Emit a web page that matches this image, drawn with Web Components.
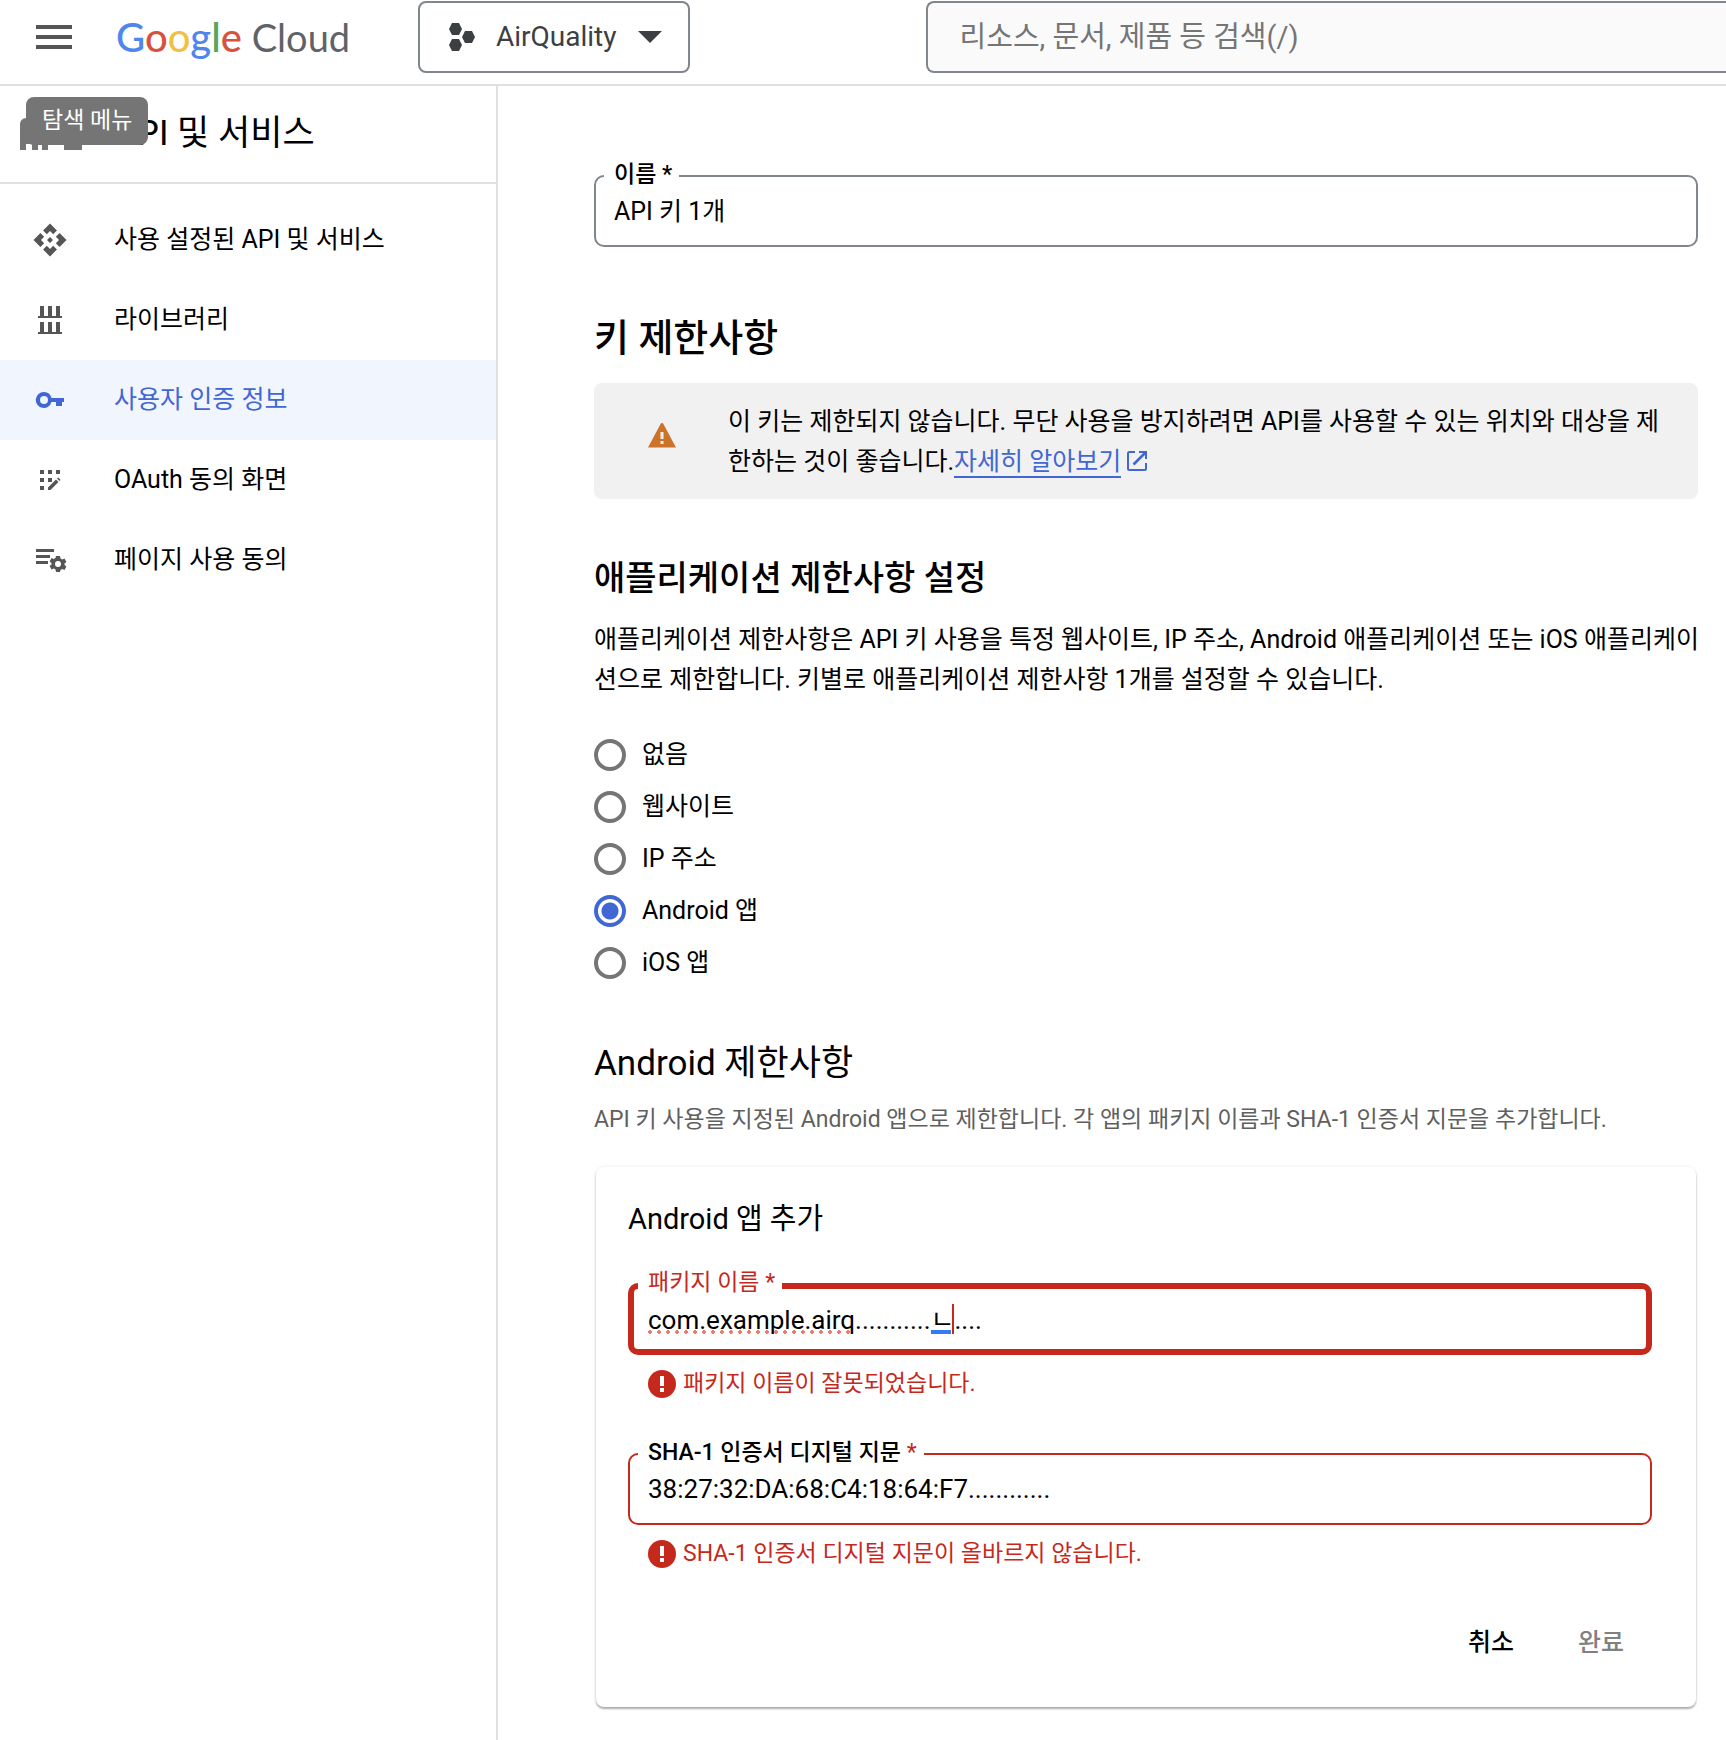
<!DOCTYPE html>
<html lang="ko">
<head>
<meta charset="utf-8">
<title>API 키 수정 - Google Cloud</title>
<style>
    html, body { margin: 0; height: 100%; }
    body {
        font-family: Roboto, "Noto Sans CJK KR", sans-serif;
        font-size: 25px;
        line-height: 32px;
        color: #000;
        background: #fff;
        overflow: hidden;
    }
</style>
</head>
<body>
<console-app>
    <console-header slot="header" project="AirQuality"></console-header>
    <side-nav slot="nav" heading="API 및 서비스">
        <nav-item icon="api">사용 설정된 API 및 서비스</nav-item>
        <nav-item icon="library">라이브러리</nav-item>
        <nav-item icon="key" active>사용자 인증 정보</nav-item>
        <nav-item icon="consent">OAuth 동의 화면</nav-item>
        <nav-item icon="usage">페이지 사용 동의</nav-item>
    </side-nav>
    <key-form></key-form>
</console-app>

<script>
const ICONS = {
    menu: `<svg width="36" height="24" viewBox="0 0 36 24"><path fill="#555" d="M0 0h36v4H0zM0 10h36v4H0zM0 20h36v4H0z"/></svg>`,
    project: `<svg width="26" height="28" viewBox="0 0 26 28"><path fill="#3c4043" d="M3 0h7l3 6-3 6H3L0 6zM3 16h7l3 6-3 6H3l-3-6zM16 8h7l3 6-3 6h-7l-3-6z"/></svg>`,
    caret: `<svg width="24" height="12" viewBox="0 0 24 12"><path fill="#3c4043" d="M0 0h24L12 12z"/></svg>`,
    product: `<svg width="64" height="32" viewBox="0 0 64 32"><path fill="#757575" d="M6 0h22v32h-6v-6h-4v6h-6v-6H6v6H0V6a6 6 0 0 1 6-6zM44 0h18v32H44z"/></svg>`,
    api: `<svg width="36" height="36" viewBox="0 0 24 24"><path fill="currentColor" d="M14 12l-2 2-2-2 2-2 2 2zm-2-6l2.120 2.120 2.500-2.500L12 1 7.380 5.620l2.500 2.500L12 6zm-6 6l2.120-2.120-2.500-2.500L1 12l4.620 4.620 2.500-2.500L6 12zm12 0l-2.120 2.120 2.500 2.500L23 12l-4.620-4.620-2.500 2.500L18 12zm-6 6l-2.120-2.120-2.500 2.500L12 23l4.620-4.620-2.500-2.500L12 18z"/></svg>`,
    library: `<svg width="24" height="28" viewBox="0 0 24 28"><path fill="currentColor" d="M2 0h4v10h4V0h4v10h4V0h4v10h2v2H0v-2h2zM2 16h4v10h4V16h4v10h4V16h4v10h2v2H0v-2h2z"/></svg>`,
    key: `<svg width="28" height="16" viewBox="0 0 28 16"><path fill="currentColor" fill-rule="evenodd" d="M8 0a8 8 0 0 1 7.500 6H28v4h-2v4h-6v-4h-4.500A8 8 0 1 1 8 0zm0 4a4 4 0 1 0 0 8 4 4 0 0 0 0-8z"/></svg>`,
    consent: `<svg width="20" height="20" viewBox="0 0 20 20"><path fill="currentColor" d="M0 0h4v4H0zM8 0h4v4H8zM16 0h4v4h-4zM0 8h4v4H0zM8 8h4v4H8zM0 16h4v4H0zM8 20v-2.500l8-8 2.500 2.500-8 8zM17 8.500l1.300-1 2.200 2.200-1 1.300z"/></svg>`,
    usage: `<svg width="28" height="22" viewBox="0 0 28 22"><path fill="currentColor" d="M0 0h18v3H0zM0 6h14v3H0zM0 12h12v3H0z"/><path fill="currentColor" fill-rule="evenodd" d="M20 7h4l.5 2.500 1.700 1 2.300-.9 1.900 3.300-1.900 1.600v1.500l1.900 1.600-1.900 3.300-2.300-.9-1.700 1L24 23h-4l-.5-2.500-1.700-1-2.300.9-1.900-3.300 1.900-1.600v-1.500l-1.900-1.600 1.900-3.300 2.300.9 1.700-1zM22 12a3 3 0 1 0 0 6 3 3 0 0 0 0-6z"/></svg>`,
    warning: `<svg width="28" height="25" viewBox="0 0 28 25"><path fill="#cd7229" d="M14 0c.6 0 1 .3 1.300.8L28 24.500H0L12.700.8c.3-.5.7-.8 1.300-.8z"/><path fill="#f1f1f1" d="M12.500 9h3v7h-3zM12.500 18h3v3h-3z"/></svg>`,
    error: `<svg width="28" height="28" viewBox="0 0 28 28"><circle cx="14" cy="14" r="14" fill="#c5291c"/><path fill="#fff" d="M12 6h4v10h-4zM12 18h4v4h-4z"/></svg>`,
    launch: `<svg width="20" height="20" viewBox="0 0 20 20"><path fill="none" stroke="#4067d3" stroke-width="2" d="M8 1H2.500A1.500 1.500 0 0 0 1 2.500v15A1.500 1.500 0 0 0 2.500 19h15a1.500 1.500 0 0 0 1.500-1.500V12M12 1h7v7"/><path stroke="#4067d3" stroke-width="2.600" d="M18.500 1.500L6.500 13.500"/></svg>`
};

class ConsoleApp extends HTMLElement {
    constructor() {
        super();
        this.attachShadow({ mode: 'open' }).innerHTML = `
            <style>
                :host { display: flex; flex-direction: column; min-height: 100%; }
                .body { display: flex; flex: 1; }
                main { flex: 1; min-width: 0; padding: 89px 28px 32px 96px; }
            </style>
            <slot name="header"></slot>
            <div class="body">
                <slot name="nav"></slot>
                <main><slot></slot></main>
            </div>
        `;
    }
}

class ConsoleHeader extends HTMLElement {
    constructor() {
        super();
        this.attachShadow({ mode: 'open' }).innerHTML = `
            <style>
                :host { display: block; border-bottom: 2px solid #e0e0e0; }
                header { display: flex; align-items: center; height: 74px; padding-bottom: 10px; }
                button { font: inherit; background: none; border: 0; padding: 0; }
                svg { display: block; }
                .menu { position: relative; padding: 0 36px; }
                .tip {
                    position: absolute; z-index: 1; top: 72px; left: 26px;
                    padding: 0 16px; border-radius: 8px;
                    background: #757575; color: #fff;
                    font-size: 23px; line-height: 48px; white-space: nowrap;
                }
                .logo {
                    width: 302px; padding-left: 8px;
                    font-family: Lato, sans-serif; font-size: 38px;
                    color: #5f6368; text-decoration: none; white-space: nowrap;
                }
                .logo b { font-size: 40px; font-weight: 500; }
                .b { color: #4f86ee; } .r { color: #d9503f; }
                .y { color: #f2bf42; } .g { color: #58a55c; }
                .project {
                    display: flex; align-items: center; flex: none;
                    height: 72px; padding: 0 26px 0 29px; gap: 21px;
                    border: 2px solid #80868b; border-radius: 8px;
                    font-size: 28px; color: #3c4043;
                }
                input {
                    flex: 1; min-width: 0; box-sizing: border-box; height: 72px;
                    margin: 0 0 0 236px; padding: 0 32px;
                    border: 2px solid #80868b; border-right: 0; border-radius: 8px 0 0 8px;
                    background: #fafafa; font: inherit; font-size: 29px;
                }
                input::placeholder { color: #757575; opacity: 1; }
            </style>
            <header>
                <button class="menu" aria-label="탐색 메뉴">${ICONS.menu}<span class="tip" role="tooltip">탐색 메뉴</span></button>
                <a class="logo" href="#"><b><span class="b">G</span><span class="r">o</span><span class="y">o</span><span class="b">g</span><span class="g">l</span><span class="r">e</span></b> Cloud</a>
                <button class="project">${ICONS.project}<span>${this.getAttribute('project')}</span>${ICONS.caret}</button>
                <input type="search" placeholder="리소스, 문서, 제품 등 검색(/)" aria-label="검색">
            </header>
        `;
    }
}

class SideNav extends HTMLElement {
    constructor() {
        super();
        this.attachShadow({ mode: 'open' }).innerHTML = `
            <style>
                :host { display: block; flex: none; width: 496px; border-right: 2px solid #e0e0e0; }
                .title {
                    display: flex; align-items: center; gap: 30px;
                    height: 96px; padding-left: 20px;
                    border-bottom: 2px solid #e0e0e0;
                }
                h1 { margin: 0; font-size: 35px; font-weight: 400; }
                svg { display: block; }
                nav { padding-top: 16px; }
            </style>
            <div class="title">${ICONS.product}<h1>${this.getAttribute('heading')}</h1></div>
            <nav><slot></slot></nav>
        `;
    }
}

class NavItem extends HTMLElement {
    constructor() {
        super();
        this.attachShadow({ mode: 'open' }).innerHTML = `
            <style>
                :host { display: block; }
                a {
                    display: flex; align-items: center;
                    height: 80px; color: inherit; text-decoration: none;
                }
                .icon { display: flex; justify-content: center; width: 100px; margin-right: 14px; color: #555; }
                svg { overflow: visible; }
                :host([active]) { background: #f0f5fe; color: #4067d3; }
                :host([active]) .icon { color: inherit; }
            </style>
            <a href="#"><span class="icon">${ICONS[this.getAttribute('icon')]}</span><slot></slot></a>
        `;
    }
}

class OutlinedField extends HTMLElement {
    constructor() {
        super();
        const error = this.getAttribute('error');
        this.attachShadow({ mode: 'open' }).innerHTML = `
            <style>
                :host { display: block; --line: #80868b; }
                :host([error]) { --line: #c5291c; }
                .box { position: relative; }
                input {
                    display: block; box-sizing: border-box; width: 100%; height: 72px;
                    padding: 0 18px; border: 2px solid var(--line); border-radius: 10px;
                    background: none; outline: none; font: inherit; font-size: 26px; color: #000;
                }
                :host([mixed]) input { font-size: 25px; padding-bottom: 4px; }
                :host([focused]) input { border-width: 6px; padding: 0 14px 4px; }
                label {
                    position: absolute; top: -16px; left: 10px;
                    padding: 0 7px 0 10px; background: #fff;
                    font-size: 23px; font-weight: 500; line-height: 32px;
                }
                :host([focused]) label, :host([error]) .star { color: #c5291c; font-weight: 400; }
                .error {
                    display: flex; align-items: center; gap: 7px; height: 28px;
                    margin-top: 15px; padding-left: 20px;
                    font-size: 23px; color: #c5291c;
                }
            </style>
            <div class="box">
                <input id="field" type="text" spellcheck="false" value="${this.getAttribute('value')}">
                <label for="field">${this.getAttribute('label')} <span class="star">*</span></label>
                <slot></slot>
            </div>
            ${error ? `<div class="error">${ICONS.error}<span>${error}</span></div>` : ''}
        `;
    }
}

// spelling dots, composition underline and text caret shown over a focused field
class TypingMarks extends HTMLElement {
    constructor() {
        super();
        this.attachShadow({ mode: 'open' }).innerHTML = `
            <style>
                :host { position: absolute; inset: 0; pointer-events: none; }
                i { position: absolute; }
                .spell {
                    left: 20px; top: 47px; width: 207px; height: 4px;
                    background: radial-gradient(circle at 2px 2px, #ee7a70 2px, transparent 2px) 0 0 / 9px 4px;
                }
                .compose { left: 303px; top: 47px; width: 20px; height: 4px; background: #357af0; }
                .caret { left: 324px; top: 21px; width: 2px; height: 30px; background: #c5291c; }
            </style>
            <i class="spell"></i><i class="compose"></i><i class="caret"></i>
        `;
    }
}

class RadioOption extends HTMLElement {
    constructor() {
        super();
        this.attachShadow({ mode: 'open' }).innerHTML = `
            <style>
                :host { display: block; }
                label { display: flex; align-items: center; gap: 16px; height: 52px; }
                input {
                    appearance: none; box-sizing: border-box; width: 32px; height: 32px; margin: 0;
                    border: 4px solid #757575; border-radius: 50%;
                }
                input:checked {
                    border-color: #4067d3;
                    background: radial-gradient(circle, #4067d3 8px, transparent 9px);
                }
            </style>
            <label><input type="radio" ${this.hasAttribute('checked') ? 'checked' : ''}><slot></slot></label>
        `;
    }
}

class NoticeBox extends HTMLElement {
    constructor() {
        super();
        this.attachShadow({ mode: 'open' }).innerHTML = `
            <style>
                :host {
                    display: flex; align-items: center; gap: 52px;
                    padding: 19px 0 17px 54px; border-radius: 8px;
                    background: #f1f1f1; line-height: 40px; white-space: nowrap;
                }
                svg { flex: none; margin-bottom: 14px; }
            </style>
            ${ICONS.warning}<div><slot></slot></div>
        `;
    }
}

class AppCard extends HTMLElement {
    constructor() {
        super();
        this.attachShadow({ mode: 'open' }).innerHTML = `
            <style>
                :host {
                    display: block; margin: 31px 2px 0; padding: 32px 44px 28px 32px; border-radius: 8px;
                    box-shadow: 0 2px 2px rgba(0, 0, 0, .3), 0 0 4px rgba(0, 0, 0, .08);
                }
                h3 { margin: 0 0 44px; font-size: 29px; font-weight: 400; line-height: 40px; }
                outlined-field + outlined-field { margin-top: 55px; }
                .actions { display: flex; justify-content: flex-end; gap: 8px; margin-top: 39px; }
                button {
                    height: 72px; padding: 0 28px; border: 0; background: none;
                    font: inherit; font-weight: 500; color: #000;
                }
                button:disabled { color: #808080; }
            </style>
            <h3>Android 앱 추가</h3>
            <outlined-field label="패키지 이름" value="com.example.airq...........ㄴ...." error="패키지 이름이 잘못되었습니다." focused>
                <typing-marks></typing-marks>
            </outlined-field>
            <outlined-field label="SHA-1 인증서 디지털 지문" value="38:27:32:DA:68:C4:18:64:F7............" error="SHA-1 인증서 디지털 지문이 올바르지 않습니다."></outlined-field>
            <div class="actions"><button>취소</button><button disabled>완료</button></div>
        `;
    }
}

class KeyForm extends HTMLElement {
    constructor() {
        super();
        this.attachShadow({ mode: 'open' }).innerHTML = `
            <style>
                :host { display: block; }
                h2, h3, p { margin: 0; font-weight: 500; line-height: 48px; }
                h2 { margin: 67px 0 21px; font-size: 38px; }
                h3 { margin: 55px 0 18px; font-size: 34px; }
                p { font-weight: 400; line-height: 40px; white-space: nowrap; }
                .options { margin-top: 29px; }
                .android { margin: 51px 0 16px; font-size: 35px; font-weight: 400; }
                .hint { font-size: 23px; line-height: 32px; color: #5f5f5f; }
                a { color: #4067d3; text-decoration: none; }
                a span { border-bottom: 2px solid; }
                a svg { margin-left: 6px; vertical-align: -1px; }
            </style>
            <outlined-field label="이름" value="API 키 1개" mixed></outlined-field>
            <h2>키 제한사항</h2>
            <notice-box>이 키는 제한되지 않습니다. 무단 사용을 방지하려면 API를 사용할 수 있는 위치와 대상을 제<br>한하는 것이 좋습니다.<a href="#"><span>자세히 알아보기</span>${ICONS.launch}</a></notice-box>
            <h3>애플리케이션 제한사항 설정</h3>
            <p>애플리케이션 제한사항은 API 키 사용을 특정 웹사이트, IP 주소, Android 애플리케이션 또는 iOS 애플리케이<br>션으로 제한합니다. 키별로 애플리케이션 제한사항 1개를 설정할 수 있습니다.</p>
            <div class="options" role="radiogroup" aria-label="애플리케이션 제한사항">
                <radio-option>없음</radio-option>
                <radio-option>웹사이트</radio-option>
                <radio-option>IP 주소</radio-option>
                <radio-option checked>Android 앱</radio-option>
                <radio-option>iOS 앱</radio-option>
            </div>
            <h3 class="android">Android 제한사항</h3>
            <p class="hint">API 키 사용을 지정된 Android 앱으로 제한합니다. 각 앱의 패키지 이름과 SHA-1 인증서 지문을 추가합니다.</p>
            <app-card></app-card>
        `;
    }
}

customElements.define('console-app', ConsoleApp);
customElements.define('console-header', ConsoleHeader);
customElements.define('side-nav', SideNav);
customElements.define('nav-item', NavItem);
customElements.define('typing-marks', TypingMarks);
customElements.define('outlined-field', OutlinedField);
customElements.define('radio-option', RadioOption);
customElements.define('notice-box', NoticeBox);
customElements.define('app-card', AppCard);
customElements.define('key-form', KeyForm);
</script>
</body>
</html>
